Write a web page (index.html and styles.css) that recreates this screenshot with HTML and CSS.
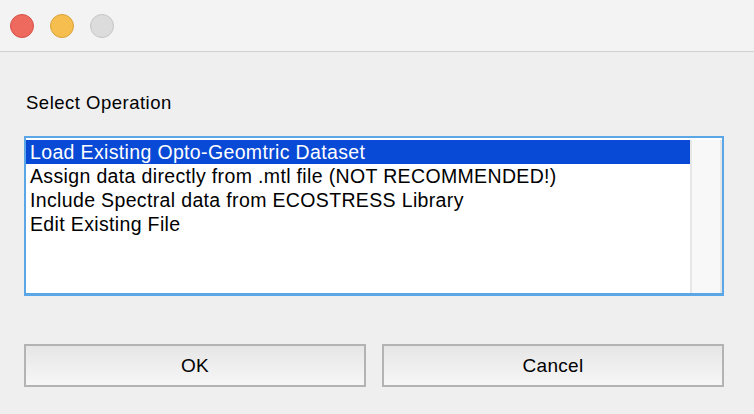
FILE: index.html
```html
<!DOCTYPE html>
<html>
<head>
<meta charset="utf-8">
<link rel="stylesheet" href="styles.css">
</head>
<body>
<div class="window">
  <div class="titlebar">
    <span class="light red"></span>
    <span class="light yellow"></span>
    <span class="light grey"></span>
  </div>
  <div class="content">
    <div class="label">Select Operation</div>
    <div class="listbox">
      <div class="items">
        <div class="item selected">Load Existing Opto-Geomtric Dataset</div>
        <div class="item">Assign data directly from .mtl file (NOT RECOMMENDED!)</div>
        <div class="item">Include Spectral data from ECOSTRESS Library</div>
        <div class="item">Edit Existing File</div>
      </div>
      <div class="scrollbar"></div>
    </div>
    <div class="buttons">
      <div class="button">OK</div>
      <div class="button">Cancel</div>
    </div>
  </div>
</div>
</body>
</html>
```
FILE: styles.css
```css
html, body {
  margin: 0;
  padding: 0;
  width: 754px;
  height: 414px;
  overflow: hidden;
  background: #efefef;
  font-family: "Liberation Sans", Arial, sans-serif;
  color: #000;
}
.window {
  width: 754px;
  height: 414px;
  display: flex;
  flex-direction: column;
}
.titlebar {
  height: 52px;
  box-sizing: border-box;
  background: #f3f3f3;
  border-bottom: 1px solid #d2d2d2;
  display: flex;
  align-items: center;
  padding-left: 10px;
  gap: 16px;
}
.light {
  width: 24px;
  height: 24px;
  border-radius: 50%;
  box-sizing: border-box;
}
.red { background: #ee6a5f; border: 1px solid #d65148; }
.yellow { background: #f6be4f; border: 1px solid #d9a33a; }
.grey { background: #dcdcdc; border: 1px solid #c5c5c5; }
.content {
  flex: 1;
  padding: 0 30px 0 24px;
  display: flex;
  flex-direction: column;
}
.label {
  font-size: 18.5px;
  letter-spacing: 0.5px;
  margin-top: 40px;
  padding-left: 2px;
  line-height: 22px;
}
.listbox {
  margin-top: 22px;
  width: 700px;
  height: 160px;
  box-sizing: border-box;
  border: 2px solid #5aa6e6;
  border-bottom-width: 3px;
  background: #fff;
  display: flex;
}
.items {
  flex: 1;
  padding-top: 2px;
}
.item {
  height: 24px;
  line-height: 24px;
  font-size: 19.5px;
  letter-spacing: 0.35px;
  padding-left: 4px;
  white-space: nowrap;
}
.item.selected {
  background: #0849d6;
  color: #fff;
}
.scrollbar {
  width: 28px;
  margin-top: 2px;
  background: #f8f8f8;
  border-left: 2px solid #e6e6e6;
  border-right: 2px solid #e6e6e6;
}
.buttons {
  margin-top: 48px;
  display: flex;
  gap: 16px;
  width: 700px;
}
.button {
  flex: 1;
  height: 43px;
  box-sizing: border-box;
  border: 2px solid #b3b3b3;
  background: linear-gradient(#e6e6e6, #f6f6f6);
  display: flex;
  align-items: center;
  justify-content: center;
  font-size: 19px;
  letter-spacing: 0.3px;
}
```
